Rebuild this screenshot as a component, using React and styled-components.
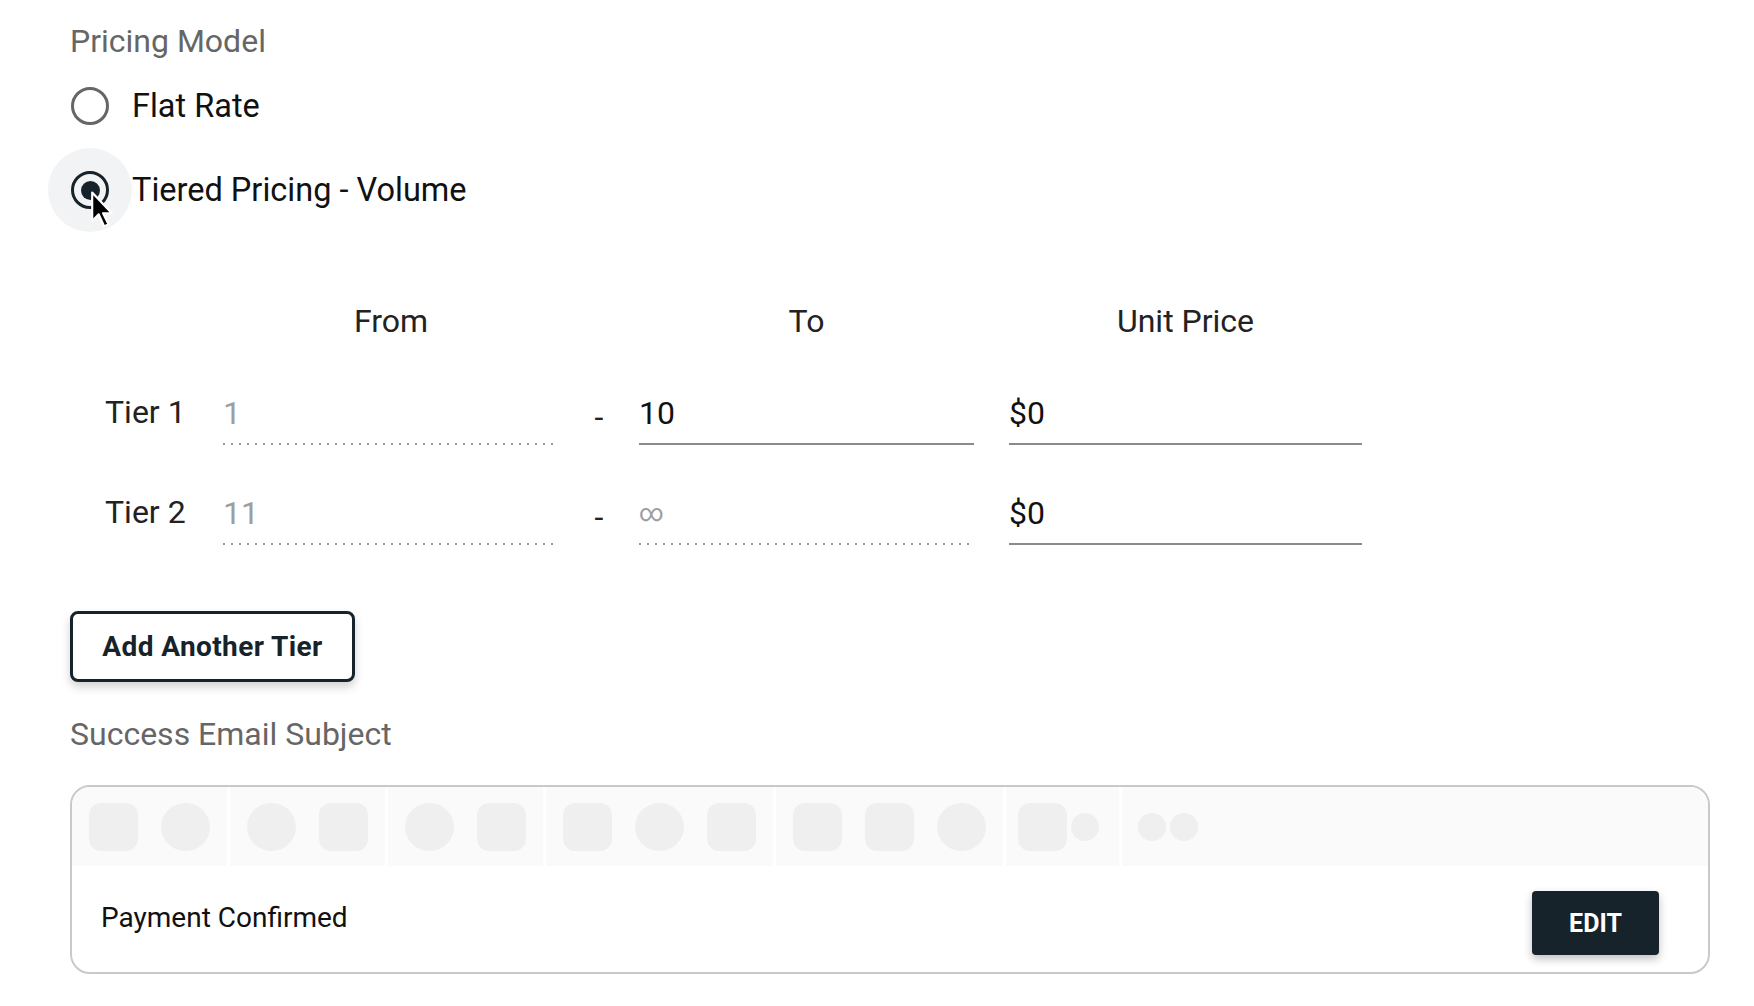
import React from 'react';
import styled, { createGlobalStyle } from 'styled-components';

const GlobalStyle = createGlobalStyle`
	body {
		margin: 0;
		background: #FFFFFF;
		font-family: Roboto, "Liberation Sans", sans-serif;
	}
`;

const tiers = [
	{ name: 'Tier 1', from: '1', to: '10', price: '$0' },
	{ name: 'Tier 2', from: '11', to: '∞', price: '$0', toDisabled: true }
];

// skeleton shapes for the editor toolbar, one array per group
const toolbarGroups = [
	{ shapes: ['sq', 'ci'] },
	{ shapes: ['ci', 'sq'] },
	{ shapes: ['ci', 'sq'] },
	{ shapes: ['sq', 'ci', 'sq'] },
	{ shapes: ['sq', 'sq', 'ci'] },
	{ shapes: ['sq', 'dot'], tight: true, pad: '0 20px 0 12px' },
	{ shapes: ['dot', 'dot'], tight: true, pad: '0 0 0 16px', last: true }
];

const Cursor = () => (
	<CursorWrap>
		<svg width="24" height="40" viewBox="0 0 22 36">
			<path d="M2 2 L2 28 L8 22 L13 33 L17 31 L12 21 L20 21 Z" fill="#000" stroke="#fff" strokeWidth="2" strokeLinejoin="round"/>
		</svg>
	</CursorWrap>
);

export default function App() {
	return (
		<Page>
			<GlobalStyle/>
			<FieldLabel>Pricing Model</FieldLabel>
			<RadioGroup>
				<RadioRow>
					<RadioHit>
						<RadioCircle/>
					</RadioHit>
					<RadioText>Flat Rate</RadioText>
				</RadioRow>
				<RadioRow>
					<RadioHit hovered>
						<RadioCircle checked/>
						<Cursor/>
					</RadioHit>
					<RadioText>Tiered Pricing - Volume</RadioText>
				</RadioRow>
			</RadioGroup>

			<TierTable>
				<span/>
				<ColHead>From</ColHead>
				<span/>
				<ColHead>To</ColHead>
				<ColHead offset>Unit Price</ColHead>
				{tiers.map(tier => (
					<React.Fragment key={tier.name}>
						<TierName>{tier.name}</TierName>
						<TierInput disabled>{tier.from}</TierInput>
						<Dash>-</Dash>
						<TierInput disabled={tier.toDisabled} small={tier.toDisabled}>{tier.to}</TierInput>
						<TierInput offset>{tier.price}</TierInput>
					</React.Fragment>
				))}
			</TierTable>

			<OutlineButton>Add Another Tier</OutlineButton>

			<FieldLabel>Success Email Subject</FieldLabel>
			<EditorBox>
				<Toolbar>
					{toolbarGroups.map((group, i) => (
						<ToolGroup key={i} tight={group.tight} pad={group.pad} last={group.last}>
							{group.shapes.map((kind, j) => <Skeleton key={j} kind={kind}/>)}
						</ToolGroup>
					))}
				</Toolbar>
				<EditorBody>
					<SubjectText>Payment Confirmed</SubjectText>
					<SolidButton>EDIT</SolidButton>
				</EditorBody>
			</EditorBox>
		</Page>
	);
}

const Page = styled.div`
	padding: 19px 44px 0 70px;
	display: flex;
	flex-direction: column;
	align-items: flex-start;
`;

const FieldLabel = styled.div`
	font-size: 32px;
	line-height: 44px;
	color: #666666;
`;

const RadioGroup = styled.div`
	display: flex;
	flex-direction: column;
	margin-top: 1px;
	margin-left: -22px;
`;

const RadioRow = styled.div`
	display: flex;
	align-items: center;
	height: 84px;
`;

const RadioHit = styled.div`
	position: relative;
	width: 84px;
	height: 84px;
	border-radius: 50%;
	display: flex;
	align-items: center;
	justify-content: center;
	background: ${p => p.hovered ? '#F2F3F4' : 'transparent'};
`;

const RadioCircle = styled.div`
	width: 38px;
	height: 38px;
	box-sizing: border-box;
	border-radius: 50%;
	border: 3.5px solid ${p => p.checked ? '#17232B' : '#666666'};
	display: flex;
	align-items: center;
	justify-content: center;
	&::after {
		content: '';
		display: ${p => p.checked ? 'block' : 'none'};
		width: 19px;
		height: 19px;
		border-radius: 50%;
		background: #17232B;
	}
`;

const CursorWrap = styled.div`
	position: absolute;
	left: 42px;
	top: 42px;
	line-height: 0;
`;

const RadioText = styled.div`
	font-size: 32.5px;
	color: #111111;
`;

const TierTable = styled.div`
	display: grid;
	grid-template-columns: 118px 336px 80px 335px 388px;
	grid-auto-rows: auto;
	margin-top: 69px;
	margin-left: 35px;
	row-gap: 40px;
	align-items: end;
`;

const ColHead = styled.div`
	font-size: 32px;
	line-height: 40px;
	color: #222222;
	text-align: center;
	padding-left: ${p => p.offset ? '35px' : '0'};
	margin-bottom: 4px;
`;

const TierName = styled.div`
	font-size: 32px;
	color: #222222;
	height: 60px;
	line-height: 58px;
	align-self: start;
	margin-top: -2px;
`;

const TierInput = styled.div`
	height: 58px;
	line-height: 56px;
	font-size: ${p => p.small ? '24px' : '32px'};
	color: ${p => p.disabled ? '#9E9E9E' : '#111111'};
	margin-left: ${p => p.offset ? '35px' : '0'};
	box-sizing: content-box;
	${p => p.disabled ? `
		padding-bottom: 2px;
		background-image: linear-gradient(to right, #9A9A9A 2px, transparent 2px);
		background-size: 8px 2px;
		background-repeat: repeat-x;
		background-position: left bottom;
	` : `
		border-bottom: 2px solid #8A8A8A;
	`}
`;

const Dash = styled.div`
	font-size: 32px;
	color: #222222;
	text-align: center;
	height: 60px;
	line-height: 64px;
`;

const OutlineButton = styled.button`
	margin-top: 66px;
	width: 285px;
	height: 71px;
	border: 3.5px solid #17232B;
	border-radius: 8px;
	background: #FFFFFF;
	color: #17232B;
	font-family: Roboto, "Liberation Sans", sans-serif;
	font-weight: 700;
	font-size: 28px;
	letter-spacing: 0.4px;
	box-shadow: 0 5px 10px rgba(0, 0, 0, 0.18);
	padding: 0;
	cursor: pointer;
	margin-bottom: 30px;
`;

const EditorBox = styled.div`
	margin-top: 29px;
	align-self: stretch;
	border: 2px solid #C9C9C9;
	border-radius: 20px;
	overflow: hidden;
	height: 189px;
	box-sizing: border-box;
	display: flex;
	flex-direction: column;
`;

const Toolbar = styled.div`
	display: flex;
	height: 79px;
	background: #FAFAFA;
	flex-shrink: 0;
`;

const ToolGroup = styled.div`
	display: flex;
	align-items: center;
	gap: ${p => p.tight ? '4px' : '23px'};
	padding: ${p => p.pad || '0 17px'};
	border-right: ${p => p.last ? 'none' : '3px solid #FFFFFF'};
`;

const Skeleton = styled.div`
	width: ${p => p.kind === 'dot' ? '28px' : '49px'};
	height: ${p => p.kind === 'dot' ? '28px' : '48px'};
	border-radius: ${p => p.kind === 'sq' ? '12px' : '50%'};
	background: #EFEFEF;
`;

const EditorBody = styled.div`
	flex: 1;
	display: flex;
	align-items: center;
	justify-content: space-between;
	padding: 8px 49px 0 29px;
`;

const SubjectText = styled.div`
	font-size: 28px;
	color: #111111;
	margin-bottom: 12px;
`;

const SolidButton = styled.button`
	width: 127px;
	height: 64px;
	border: none;
	border-radius: 4px;
	background: #17232B;
	color: #FFFFFF;
	font-family: Roboto, "Liberation Sans", sans-serif;
	font-weight: 700;
	font-size: 25px;
	box-shadow: 0 4px 8px rgba(0, 0, 0, 0.25);
	cursor: pointer;
`;
